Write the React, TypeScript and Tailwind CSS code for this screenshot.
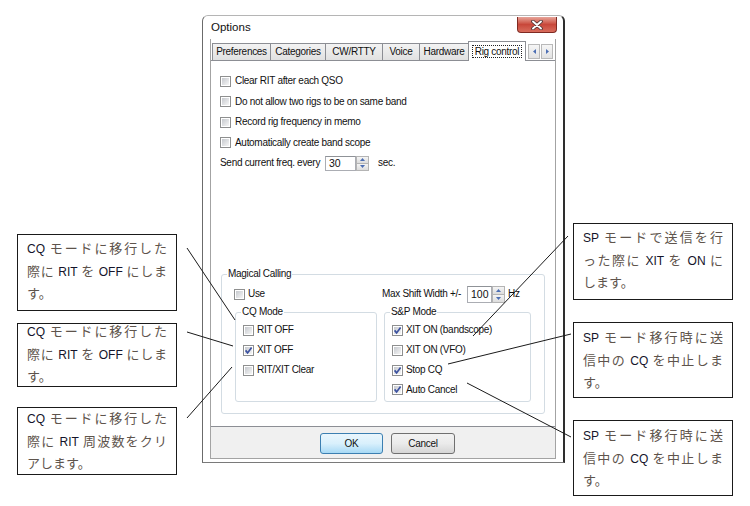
import React from "react";

const UI = "font-['Liberation_Sans',Arial,sans-serif]";

const TABS = [
  { label: "Preferences", w: "w-[59px]" },
  { label: "Categories", w: "w-[56px]" },
  { label: "CW/RTTY", w: "w-[58px]" },
  { label: "Voice", w: "w-[38px]" },
  { label: "Hardware", w: "w-[50px]" },
];

function Check({ on }: { on?: boolean }) {
  return (
    <span className="relative shrink-0 w-[11px] h-[11px] border border-[#8e8f8f] bg-white p-[1px]">
      <span className="block w-full h-full bg-gradient-to-br from-[#c6c9ce] to-[#f6f6f6]" />
      {on && (
        <svg className="absolute -left-px -top-px" width="11" height="11" viewBox="0 0 11 11">
          <path d="M2.6 5.4 L4.6 7.9 L8.6 2.4" stroke="#3c52a0" strokeWidth="1.7" fill="none" />
        </svg>
      )}
    </span>
  );
}

function Row({ on, label, gap = "gap-[3px]", h = "h-[20px]" }: { on?: boolean; label: string; gap?: string; h?: string }) {
  return (
    <div className={`flex items-center whitespace-nowrap ${gap} ${h}`}>
      <Check on={on} />
      <span className="leading-none">{label}</span>
    </div>
  );
}

function Spin() {
  return (
    <span className="flex flex-col w-[13px] self-stretch">
      <span className="flex-1 grid place-items-center border border-[#b4b4b4] bg-gradient-to-b from-[#f5f5f5] to-[#dcdcdc]">
        <svg width="5" height="3" viewBox="0 0 5 3"><path d="M0 3 L2.5 0 L5 3 Z" fill="#4c6eb3" /></svg>
      </span>
      <span className="flex-1 grid place-items-center border border-t-0 border-[#b4b4b4] bg-gradient-to-b from-[#f5f5f5] to-[#dcdcdc]">
        <svg width="5" height="3" viewBox="0 0 5 3"><path d="M0 0 L2.5 3 L5 0 Z" fill="#4c6eb3" /></svg>
      </span>
    </span>
  );
}

function Note({ lines, box, pad }: { lines: React.ReactNode[]; box: string; pad: string }) {
  return (
    <div className={`border-[1.5px] border-[#1a1a1a] bg-white pl-[9px] ${box} ${pad}`}>
      <div className="w-[140px] flex flex-col gap-[7.5px] font-['Noto_Sans_CJK_JP',sans-serif] text-[13px] leading-[14px] text-[#5e544c] whitespace-nowrap">
        {lines.map((l, i) => (
          <div key={i} className={i < lines.length - 1 ? "text-justify [text-align-last:justify] [text-justify:inter-character]" : ""}>
            {l}
          </div>
        ))}
      </div>
    </div>
  );
}

function L({ children }: { children: React.ReactNode }) {
  return <span className="font-['Liberation_Sans',sans-serif] text-[12px] text-[#14142a]">{children}</span>;
}

function Dialog() {
  return (
    <div className={`${UI} text-[10px] tracking-[-0.3px] text-[#111] w-[363px] h-[448px] ml-[25px] mt-[15px] flex flex-col bg-white border-l border-t border-b border-r-2 border-l-[#6b6b6b] border-t-[#b5b5b5] border-b-[#7a7a7a] border-r-[#2e2e2e] rounded-t-[6px]`}>
      <div className="h-[23px] flex items-start justify-between pl-[8px] pr-[6px]">
        <span className="pt-[6px] text-[11.5px] tracking-normal leading-none">Options</span>
        <span className="mt-[1px] w-[40px] h-[16px] grid place-items-center rounded-b-[4px] border border-t-0 border-[#7f2a22] bg-gradient-to-b from-[#e6a49a] via-[#c8473a] to-[#d86c5c]">
          <svg width="14" height="10" viewBox="0 0 14 10">
            <path d="M3 1.5 L11 8.5 M11 1.5 L3 8.5" stroke="#4a3030" strokeWidth="3.6" strokeLinecap="round" />
            <path d="M3 1.5 L11 8.5 M11 1.5 L3 8.5" stroke="#fff" strokeWidth="1.9" strokeLinecap="round" />
          </svg>
        </span>
      </div>

      <div className="flex-1 flex flex-col mx-[7px] mb-[3px] border-l border-r border-b border-[#a3a3a3] bg-[#f0f0f0]">
        <div className="flex items-end h-[21px] pl-[1px] bg-white whitespace-nowrap">
          {TABS.map((t) => (
            <div
              key={t.label}
              className={`${t.w} h-[17px] -mr-px flex items-center justify-center border border-b-0 border-[#8c8e94] bg-gradient-to-b from-[#f3f3f3] to-[#e1e1e1] leading-none`}
            >
              {t.label}
            </div>
          ))}
          <div className="relative z-10 w-[58px] h-[20px] -mb-px flex items-center justify-center border border-b-0 border-[#8c8e94] bg-white">
            <span className="border border-dotted border-[#222] px-[2px] h-[13px] leading-[11px]">Rig control</span>
          </div>
          <div className="ml-[2px] mb-px flex gap-px">
            <span className="w-[12px] h-[15px] grid place-items-center border border-[#b9b9b9] bg-gradient-to-b from-[#f6f6f6] to-[#e2e2e2]">
              <svg width="3" height="5" viewBox="0 0 3 5"><path d="M3 0 L0 2.5 L3 5 Z" fill="#4c6eb3" /></svg>
            </span>
            <span className="w-[12px] h-[15px] grid place-items-center border border-[#b9b9b9] bg-gradient-to-b from-[#f6f6f6] to-[#e2e2e2]">
              <svg width="3" height="5" viewBox="0 0 3 5"><path d="M0 0 L3 2.5 L0 5 Z" fill="#4c6eb3" /></svg>
            </span>
          </div>
        </div>

        <div className="h-[367px] flex flex-col bg-white border-t border-b border-[#8c8e94] pl-[9px] pt-[10px]">
          <Row label="Clear RIT after each QSO" gap="gap-[4px]" h="h-[20.5px]" />
          <Row label="Do not allow two rigs to be on same band" gap="gap-[4px]" h="h-[20.5px]" />
          <Row label="Record rig frequency in memo" gap="gap-[4px]" h="h-[20.5px]" />
          <Row label="Automatically create band scope" gap="gap-[4px]" h="h-[20.5px]" />
          <div className="flex items-center h-[20.5px] whitespace-nowrap">
            <span className="w-[105px] leading-none">Send current freq. every</span>
            <span className="flex h-[15px]">
              <span className="w-[31px] border border-[#abadb3] border-t-[#8f9297] pl-[3px] text-[10.5px] tracking-normal leading-[13px]">30</span>
              <Spin />
            </span>
            <span className="ml-[9px] leading-none">sec.</span>
          </div>

          <div className="relative mt-auto mb-[12px] ml-[1px] mr-[10px] h-[140px] border border-[#d3dce3] rounded-[3px] pt-[10px] whitespace-nowrap">
            <span className="absolute -top-[7px] left-[5px] bg-white px-px leading-[12px]">Magical Calling</span>
            <div className="flex items-center h-[18px] pl-[12px]">
              <div className="w-[148px] flex items-center gap-[3px]">
                <Check />
                <span className="leading-none">Use</span>
              </div>
              <span className="w-[85px] leading-none">Max Shift Width +/-</span>
              <span className="flex h-[17px]">
                <span className="w-[25px] border border-[#abadb3] border-t-[#8f9297] pl-[3px] text-[10.5px] tracking-normal leading-[15px]">100</span>
                <Spin />
              </span>
              <span className="ml-[3px] leading-none">Hz</span>
            </div>
            <div className="flex gap-[7px] pl-[13px] mt-[9px]">
              <div className="relative w-[142px] h-[90px] border border-[#d3dce3] rounded-[3px] pl-[7px] pt-[7px]">
                <span className="absolute -top-[7px] left-[5px] bg-white px-px leading-[12px]">CQ Mode</span>
                <Row label="RIT OFF" />
                <Row on label="XIT OFF" />
                <Row label="RIT/XIT Clear" />
              </div>
              <div className="relative w-[147px] h-[90px] border border-[#d3dce3] rounded-[3px] pl-[7px] pt-[7px]">
                <span className="absolute -top-[7px] left-[5px] bg-white px-px leading-[12px]">S&amp;P Mode</span>
                <Row on label="XIT ON (bandscope)" />
                <Row label="XIT ON (VFO)" />
                <Row on label="Stop CQ" />
                <Row on label="Auto Cancel" h="h-[19px]" />
              </div>
            </div>
          </div>
        </div>

        <div className="flex-1 flex justify-center gap-[8px] pl-[9px] pt-[6px]">
          <button className="w-[63px] h-[21px] rounded-[3px] border border-[#3c7fb1] bg-gradient-to-b from-[#eaf6fd] via-[#d9f0fc] to-[#a7d9f5] leading-none">
            OK
          </button>
          <button className="w-[64px] h-[21px] rounded-[3px] border border-[#707070] bg-gradient-to-b from-[#f2f2f2] via-[#ebebeb] to-[#d5d5d5] leading-none">
            Cancel
          </button>
        </div>
      </div>
    </div>
  );
}

export default function App() {
  return (
    <div className="relative w-[750px] h-[506px] overflow-hidden bg-white flex">
      <div className="ml-[17px] w-[160px] flex flex-col">
        <Note
          box="mt-[234px] h-[77px]"
          pad="pt-[6px]"
          lines={[<>
            <L>CQ</L> モードに移行した
          </>, <>
            際に <L>RIT</L> を <L>OFF</L> にしま
          </>, "す。"]}
        />
        <Note
          box="mt-[12px] h-[64px]"
          pad="pt-0"
          lines={[<>
            <L>CQ</L> モードに移行した
          </>, <>
            際に <L>RIT</L> を <L>OFF</L> にしま
          </>, "す。"]}
        />
        <Note
          box="mt-[20px] h-[68px]"
          pad="pt-[3px]"
          lines={[<>
            <L>CQ</L> モードに移行した
          </>, <>
            際に <L>RIT</L> 周波数をクリ
          </>, "アします。"]}
        />
      </div>

      <Dialog />

      <div className="ml-[8px] w-[160px] flex flex-col">
        <Note
          box="mt-[223px] h-[77px]"
          pad="pt-[6px]"
          lines={[<>
            <L>SP</L> モードで送信を行
          </>, <>
            った際に <L>XIT</L> を <L>ON</L> に
          </>, "します。"]}
        />
        <Note
          box="mt-[22px] h-[76px]"
          pad="pt-[7px]"
          lines={[<>
            <L>SP</L> モード移行時に送
          </>, <>
            信中の <L>CQ</L> を中止しま
          </>, "す。"]}
        />
        <Note
          box="mt-[22px] h-[76px]"
          pad="pt-[7px]"
          lines={[<>
            <L>SP</L> モード移行時に送
          </>, <>
            信中の <L>CQ</L> を中止しま
          </>, "す。"]}
        />
      </div>

      <svg className="absolute inset-0 pointer-events-none" width="750" height="506" viewBox="0 0 750 506">
        <g stroke="#1a1a1a" strokeWidth="1">
          <line x1="187" y1="248" x2="235" y2="320" />
          <line x1="187" y1="332" x2="233" y2="346" />
          <line x1="187" y1="418" x2="232" y2="367" />
          <line x1="568" y1="236" x2="473" y2="336" />
          <line x1="448" y1="364" x2="571" y2="334" />
          <line x1="467" y1="383" x2="571" y2="437" />
        </g>
      </svg>
    </div>
  );
}
